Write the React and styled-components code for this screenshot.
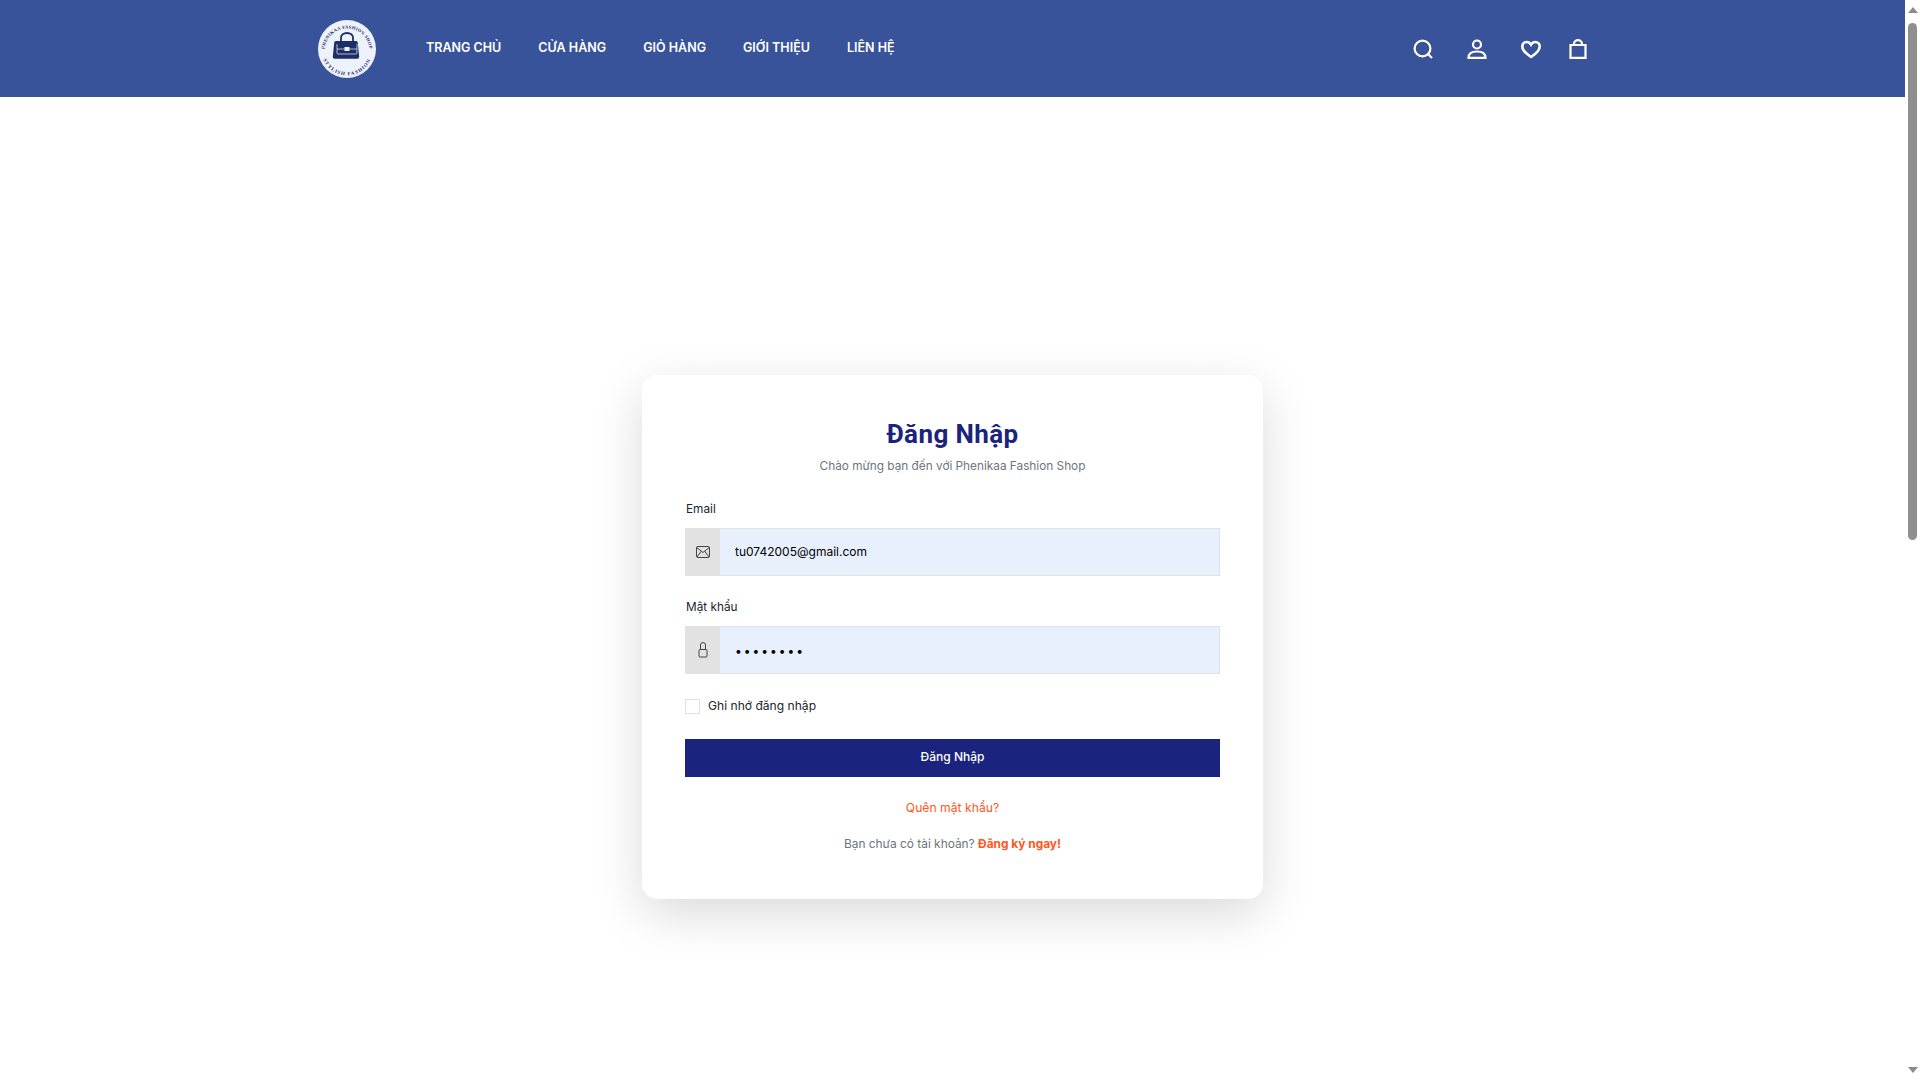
import React from 'react'
import styled, { createGlobalStyle } from 'styled-components'

const GlobalStyle = createGlobalStyle`
  body {
    margin: 0;
    background: #fff;
    font-family: Inter, "Noto Sans", sans-serif;
    color: #212529;
  }
  * {
    box-sizing: border-box;
  }
`
const Page = styled.div`
  display: flex;
  height: 100vh;
  overflow: hidden;
`
const Content = styled.div`
  flex-grow: 1;
  min-width: 0;
`
const ScrollBar = styled.aside`
  width: 15px;
  flex-shrink: 0;
  background: #fff;
  display: flex;
  flex-direction: column;
  align-items: center;
  padding: 7px 0 7px;
`
const ScrollArrow = styled.span`
  width: 0;
  height: 0;
  border-left: 5px solid transparent;
  border-right: 5px solid transparent;
  ${props => props.down ? 'border-top: 6px solid #8a8a8a; margin-top: auto;' : 'border-bottom: 6px solid #8a8a8a;'}
`
const ScrollThumb = styled.span`
  width: 9px;
  height: 517px;
  margin-top: 10px;
  border-radius: 5px;
  background: #8f8f8f;
`
const Header = styled.header`
  height: 97px;
  background: #385399;
  display: flex;
  align-items: center;
  padding: 0 318px;
`
const Logo = styled.svg`
  width: 58px;
  height: 58px;
  flex-shrink: 0;
`
const Nav = styled.nav`
  display: flex;
  gap: 37px;
  margin-left: 50px;
  flex-grow: 1;
  padding-bottom: 2px;
`
const NavLink = styled.a`
  color: #fff;
  font-size: 12.5px;
  font-weight: 600;
  line-height: 18px;
  white-space: nowrap;
`
const IconRow = styled.div`
  display: flex;
  align-items: center;
`
const HeaderIcon = styled.svg`
  width: ${props => props.size || 20}px;
  height: 20px;
  margin-left: ${props => props.gap || 0}px;
  fill: none;
  stroke: #fff;
  stroke-width: 2.2;
  display: block;
`
const Main = styled.main`
  display: flex;
  justify-content: center;
  padding-top: 278px;
`
const Card = styled.div`
  width: 621px;
  height: 524px;
  background: #fff;
  border-radius: 15px;
  box-shadow: 0 15px 50px rgba(0, 0, 0, 0.15);
  padding: 43px 43px 0;
`
const Title = styled.h1`
  margin: 0;
  text-align: center;
  font-family: Roboto, sans-serif;
  font-size: 26px;
  font-weight: 700;
  line-height: 32px;
  letter-spacing: 0.4px;
  color: #1a237e;
`
const Subtitle = styled.p`
  margin: 7px 0 0;
  text-align: center;
  font-size: 11.8px;
  line-height: 18px;
  color: #6c757d;
`
const Field = styled.div`
  margin-top: ${props => props.top}px;
`
const Label = styled.label`
  display: block;
  font-size: 11.8px;
  line-height: 18px;
  padding: 1px 0 0 1px;
  margin-bottom: 10px;
  color: #212529;
`
const InputGroup = styled.div`
  display: flex;
  height: 48px;
`
const Addon = styled.span`
  width: 35px;
  flex-shrink: 0;
  background: #e2e2e2;
  border: 1px solid #dee2e6;
  border-right: 0;
  display: flex;
  align-items: center;
  justify-content: center;
`
const AddonIcon = styled.svg`
  width: 16px;
  height: 16px;
  fill: none;
  stroke: #444;
  stroke-width: 1;
`
const Input = styled.input`
  flex-grow: 1;
  min-width: 0;
  background: #e8f0fe;
  border: 1px solid #dee2e6;
  border-left: 0;
  outline: 0;
  padding: ${props => props.type === 'password' ? '0 14px 0 15px' : '0 14px 2px 15px'};
  font-family: Inter, sans-serif;
  font-size: 12px;
  letter-spacing: ${props => props.type === 'password' ? '2px' : '0'};
  color: #000;
`
const RememberRow = styled.label`
  display: flex;
  align-items: center;
  gap: 8px;
  margin-top: 24px;
  font-size: 12.1px;
  line-height: 16px;
  color: #212529;
`
const CheckBox = styled.span`
  width: 15px;
  height: 15px;
  border: 1px solid #dee2e6;
  background: #fff;
  flex-shrink: 0;
`
const SubmitButton = styled.button`
  display: block;
  width: 100%;
  height: 38px;
  margin-top: 25px;
  padding: 0 0 3px;
  border: 0;
  background: #1a237e;
  color: #fff;
  font-family: Inter, sans-serif;
  font-size: 12px;
  font-weight: 500;
`
const Forgot = styled.a`
  display: block;
  margin-top: 23px;
  text-align: center;
  font-size: 12.2px;
  line-height: 16px;
  color: #ff5722;
`
const SignUp = styled.p`
  margin: 20px 0 0;
  text-align: center;
  font-size: 11.9px;
  line-height: 16px;
  color: #6c757d;
`
const SignUpLink = styled.a`
  color: #ff5722;
  font-weight: 700;
`

const navItems = ['TRANG CHỦ', 'CỬA HÀNG', 'GIỎ HÀNG', 'GIỚI THIỆU', 'LIÊN HỆ']

function ShopLogo() {
  return (
    <Logo viewBox="0 0 58 58">
      <defs>
        <path id="logoTop" d="M6.500 31 A22.500 22.500 0 1 1 51.500 31" />
        <path id="logoBottom" d="M3.500 30 A25.500 25.500 0 0 0 54.500 30" />
      </defs>
      <circle cx="29" cy="29" r="29" fill="#eef2fb" />
      <text fontFamily="Liberation Serif, serif" fontSize="4.600" fontWeight="700" fill="#1c2f66" letterSpacing="0.3">
        <textPath href="#logoTop" startOffset="50%" textAnchor="middle">PHENIKAA FASHION SHOP</textPath>
      </text>
      <text fontFamily="Liberation Serif, serif" fontSize="5" fontWeight="700" fill="#1c2f66" letterSpacing="1">
        <textPath href="#logoBottom" startOffset="50%" textAnchor="middle">STYLISH FASHION</textPath>
      </text>
      <path d="M23 21v-3.500a6 4.500 0 0 1 12 0v3.500" fill="none" stroke="#1c2f66" strokeWidth="1.800" />
      <path d="M20 21h18q1.600 0 1.800 1.800l1.400 14q.1 2-1.900 2h-22.600q-2 0-1.900-2l1.400-14q.2-1.800 1.800-1.800z" fill="#1c2f66" />
      <path d="M19 24v9q0 1 1 1h18q1 0 1-1v-9" fill="none" stroke="#eef2fb" strokeWidth="0.700" />
      <path d="M19 29h20" stroke="#eef2fb" strokeWidth="0.700" />
      <rect x="26.500" y="27" width="5" height="4" fill="#eef2fb" />
    </Logo>
  )
}

function App() {
  return (
    <Page>
      <GlobalStyle />
      <Content>
        <Header>
          <ShopLogo />
          <Nav>
            {navItems.map(item => (
              <NavLink key={item}>{item}</NavLink>
            ))}
          </Nav>
          <IconRow>
            <HeaderIcon viewBox="0 0 20 20">
              <circle cx="9.500" cy="9.500" r="7.900" />
              <path d="M15 15l4 4" />
            </HeaderIcon>
            <HeaderIcon viewBox="0 0 20 20" gap={34}>
              <circle cx="10" cy="5.500" r="4" />
              <path d="M1.500 18.800c0-4.300 3.500-6.300 8.500-6.300s8.500 2 8.500 6.300z" />
            </HeaderIcon>
            <HeaderIcon viewBox="0 0 20 20" gap={34}>
              <path d="M10 18C4 14 1.300 11.300 1.300 7.400 1.300 4.800 3.300 3 5.700 3c1.900 0 3.300 1 4.300 2.700C11 4 12.400 3 14.300 3c2.400 0 4.400 1.800 4.400 4.400C18.700 11.300 16 14 10 18z" strokeWidth="2.600" />
            </HeaderIcon>
            <HeaderIcon viewBox="0 0 18 20" size={18} gap={28}>
              <path d="M1.500 6h15v12.800h-15z" />
              <path d="M5 6V5a4 3.800 0 0 1 8 0v1" />
            </HeaderIcon>
          </IconRow>
        </Header>
        <Main>
          <Card>
            <Title>Đăng Nhập</Title>
            <Subtitle>Chào mừng bạn đến với Phenikaa Fashion Shop</Subtitle>
            <Field top={24}>
              <Label>Email</Label>
              <InputGroup>
                <Addon>
                  <AddonIcon viewBox="0 0 16 16">
                    <rect x="1.500" y="2.500" width="13" height="11" rx="1.500" />
                    <path d="M1.800 3.500L8 8.500l6.200-5M2 13l4.300-5.800M14 13L9.700 7.200" />
                  </AddonIcon>
                </Addon>
                <Input type="email" value="tu0742005@gmail.com" readOnly />
              </InputGroup>
            </Field>
            <Field top={21}>
              <Label>Mật khẩu</Label>
              <InputGroup>
                <Addon>
                  <AddonIcon viewBox="0 0 16 16">
                    <rect x="4" y="7.500" width="8" height="7.500" rx="1" />
                    <path d="M5.500 7.500V3a2.500 2.500 0 0 1 5 0v4.500" />
                  </AddonIcon>
                </Addon>
                <Input type="password" value="password" readOnly />
              </InputGroup>
            </Field>
            <RememberRow>
              <CheckBox />
              Ghi nhớ đăng nhập
            </RememberRow>
            <SubmitButton>Đăng Nhập</SubmitButton>
            <Forgot>Quên mật khẩu?</Forgot>
            <SignUp>
              Bạn chưa có tài khoản? <SignUpLink>Đăng ký ngay!</SignUpLink>
            </SignUp>
          </Card>
        </Main>
      </Content>
      <ScrollBar>
        <ScrollArrow />
        <ScrollThumb />
        <ScrollArrow down />
      </ScrollBar>
    </Page>
  )
}

export default App
